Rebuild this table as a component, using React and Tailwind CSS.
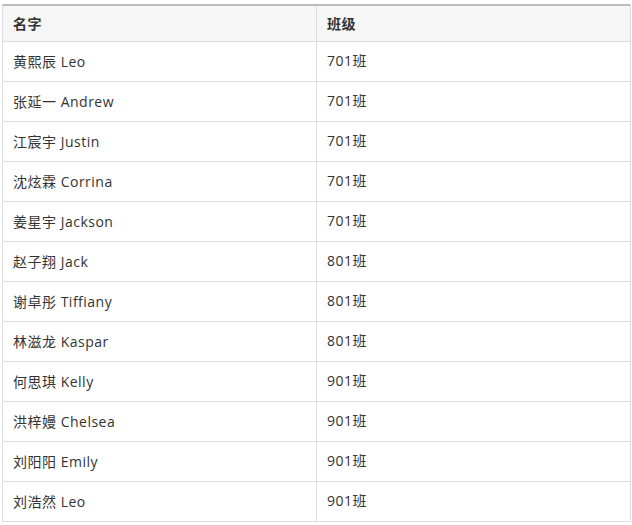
import React from "react";

const rows = [
  ["黄熙辰 Leo", "701班"],
  ["张延一 Andrew", "701班"],
  ["江宸宇 Justin", "701班"],
  ["沈炫霖 Corrina", "701班"],
  ["姜星宇 Jackson", "701班"],
  ["赵子翔 Jack", "801班"],
  ["谢卓彤 Tiffiany", "801班"],
  ["林滋龙 Kaspar", "801班"],
  ["何思琪 Kelly", "901班"],
  ["洪梓嫚 Chelsea", "901班"],
  ["刘阳阳 Emily", "901班"],
  ["刘浩然 Leo", "901班"],
];

const App = () => {
  return (
    <div
      className="bg-white w-[632px] h-[525px] pt-[4px] pl-[2px] text-[14px] text-[#333] tracking-[0.5px]"
      style={{ fontFamily: '"Open Sans", "Noto Sans CJK SC", sans-serif' }}
    >
      <div className="w-[629px] border-x border-[#dddddd]">
        {/* Header */}
        <div className="grid grid-cols-[314px_1fr] h-[38px] border-t-2 border-t-[#bbbbbb] border-b border-b-[#dddddd] bg-[#f6f6f6] font-bold">
          <div className="flex items-center pl-[10px] border-r border-[#dddddd]">名字</div>
          <div className="flex items-center pl-[10px]">班级</div>
        </div>

        {/* Rows */}
        {rows.map(([name, cls]) => (
          <div key={name} className="grid grid-cols-[314px_1fr] h-[40px] border-b border-[#dddddd]">
            <div className="flex items-center pl-[10px] border-r border-[#dddddd]">{name}</div>
            <div className="flex items-center pl-[10px] pb-[3px]">{cls}</div>
          </div>
        ))}
      </div>
    </div>
  );
};

export default App;
